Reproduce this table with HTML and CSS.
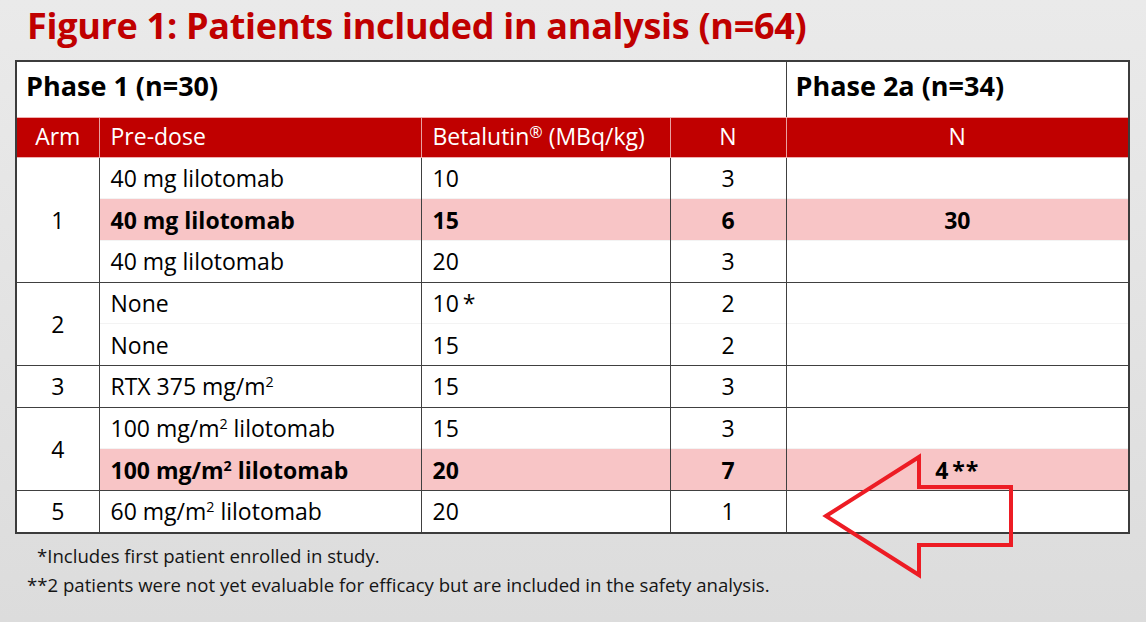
FILE: index.html
```html
<!DOCTYPE html>
<html>
<head>
<meta charset="utf-8">
<link rel="stylesheet" href="styles.css">
</head>
<body>
<div class="page">
  <h1 class="title">Figure 1: Patients included in analysis (n=64)</h1>
  <table class="grid">
    <colgroup>
      <col class="c-arm"><col class="c-pre"><col class="c-beta"><col class="c-n"><col class="c-n2">
    </colgroup>
    <tr class="phase">
      <td colspan="4" class="ph1">Phase 1 (n=30)</td>
      <td class="ph2">Phase 2a (n=34)</td>
    </tr>
    <tr class="head">
      <td class="ctr">Arm</td>
      <td>Pre-dose</td>
      <td>Betalutin<sup class="reg">®</sup> (MBq/kg)</td>
      <td class="ctr">N</td>
      <td class="ctr">N</td>
    </tr>
    <tr class="row first">
      <td rowspan="3" class="ctr arm">1</td>
      <td>40 mg lilotomab</td><td>10</td><td class="ctr">3</td><td class="ctr"></td>
    </tr>
    <tr class="row hl inner">
      <td>40 mg lilotomab</td><td>15</td><td class="ctr">6</td><td class="ctr">30</td>
    </tr>
    <tr class="row inner">
      <td>40 mg lilotomab</td><td>20</td><td class="ctr">3</td><td class="ctr"></td>
    </tr>
    <tr class="row first">
      <td rowspan="2" class="ctr arm">2</td>
      <td>None</td><td>10<span class="ast">*</span></td><td class="ctr">2</td><td class="ctr"></td>
    </tr>
    <tr class="row inner">
      <td>None</td><td>15</td><td class="ctr">2</td><td class="ctr"></td>
    </tr>
    <tr class="row first">
      <td class="ctr arm">3</td>
      <td>RTX 375 mg/m<sup>2</sup></td><td>15</td><td class="ctr">3</td><td class="ctr"></td>
    </tr>
    <tr class="row first">
      <td rowspan="2" class="ctr arm">4</td>
      <td>100 mg/m<sup>2</sup> lilotomab</td><td>15</td><td class="ctr">3</td><td class="ctr"></td>
    </tr>
    <tr class="row hl inner">
      <td>100 mg/m<sup>2</sup> lilotomab</td><td>20</td><td class="ctr">7</td><td class="ctr">4<span class="ast">**</span></td>
    </tr>
    <tr class="row first last">
      <td class="ctr arm">5</td>
      <td>60 mg/m<sup>2</sup> lilotomab</td><td>20</td><td class="ctr">1</td><td class="ctr"></td>
    </tr>
  </table>
  <p class="note n1">*Includes first patient enrolled in study.</p>
  <p class="note n2">**2 patients were not yet evaluable for efficacy but are included in the safety analysis.</p>
  <svg class="arrow" width="1146" height="622" viewBox="0 0 1146 622">
    <polygon points="826,516 919,457 919,487 1011,487 1011,545 919,545 919,575" fill="none" stroke="#ed1c24" stroke-width="4" stroke-linejoin="miter"/>
  </svg>
</div>
</body>
</html>
```
FILE: styles.css
```css
html, body {
  margin: 0;
  padding: 0;
}
body {
  width: 1146px;
  height: 622px;
  overflow: hidden;
  background: linear-gradient(#eaeaea, #dcdcdc);
  font-family: "Open Sans", Lato, sans-serif;
  color: #000;
}
.page {
  position: relative;
  width: 1146px;
  height: 622px;
  padding: 0 0 0 15px;
  box-sizing: border-box;
}
.title {
  margin: 0;
  padding: 2px 0 0 12px;
  height: 60px;
  box-sizing: border-box;
  font-size: 36px;
  font-weight: bold;
  color: #c00000;
  line-height: 48px;
  letter-spacing: -0.3px;
}
.grid {
  border-collapse: collapse;
  width: 1113px;
  table-layout: fixed;
  background: #fff;
  border: 2px solid #3c3c3c;
  font-size: 23px;
}
.c-arm { width: 83px; }
.c-pre { width: 322px; }
.c-beta { width: 249px; }
.c-n { width: 116px; }
.c-n2 { width: 343px; }
.grid td {
  padding: 0 0 0 11px;
  white-space: nowrap;
  line-height: 26px;
}
.grid td.ctr {
  text-align: center;
  padding: 0;
}
.phase td {
  height: 56px;
  box-sizing: border-box;
  padding: 0 0 6px 9px;
  font-size: 27px;
  font-weight: bold;
  border-bottom: 1px solid #f0b0b0;
}
.phase .ph2 {
  border-left: 1px solid #404040;
}
.head td {
  height: 40px;
  box-sizing: border-box;
  background: #c00000;
  color: #fff;
  border-left: 1px solid #e9a0a0;
  border-bottom: 1px solid #f0b0b0;
}
.head td, .head td.ctr {
  padding-bottom: 3px;
}
.head td:first-child { border-left: none; }
.reg {
  font-size: 0.7em;
  vertical-align: 0.45em;
  line-height: 0;
}
sup {
  font-size: 0.62em;
  vertical-align: 0.55em;
  line-height: 0;
}
.ast {
  margin-left: 4px;
  letter-spacing: 1px;
}
.row td {
  height: 40.7px;
  border-left: 1px solid #404040;
}
.row.first td {
  border-top: 1px solid #404040;
}
.row.inner td {
  border-top: 1px solid #f3f3f3;
}
.head + .row.first td { border-top: none; }
.row td.arm { border-left: none; }
.row.hl td {
  background: #f8c5c6;
  font-weight: bold;
}
.note {
  margin: 0;
  font-size: 18.6px;
  line-height: 26px;
  color: #151515;
}
.n1 {
  padding: 9px 0 0 22px;
}
.n2 {
  padding: 3px 0 0 12px;
}
.arrow {
  position: absolute;
  left: 0;
  top: 0;
  pointer-events: none;
}
```
